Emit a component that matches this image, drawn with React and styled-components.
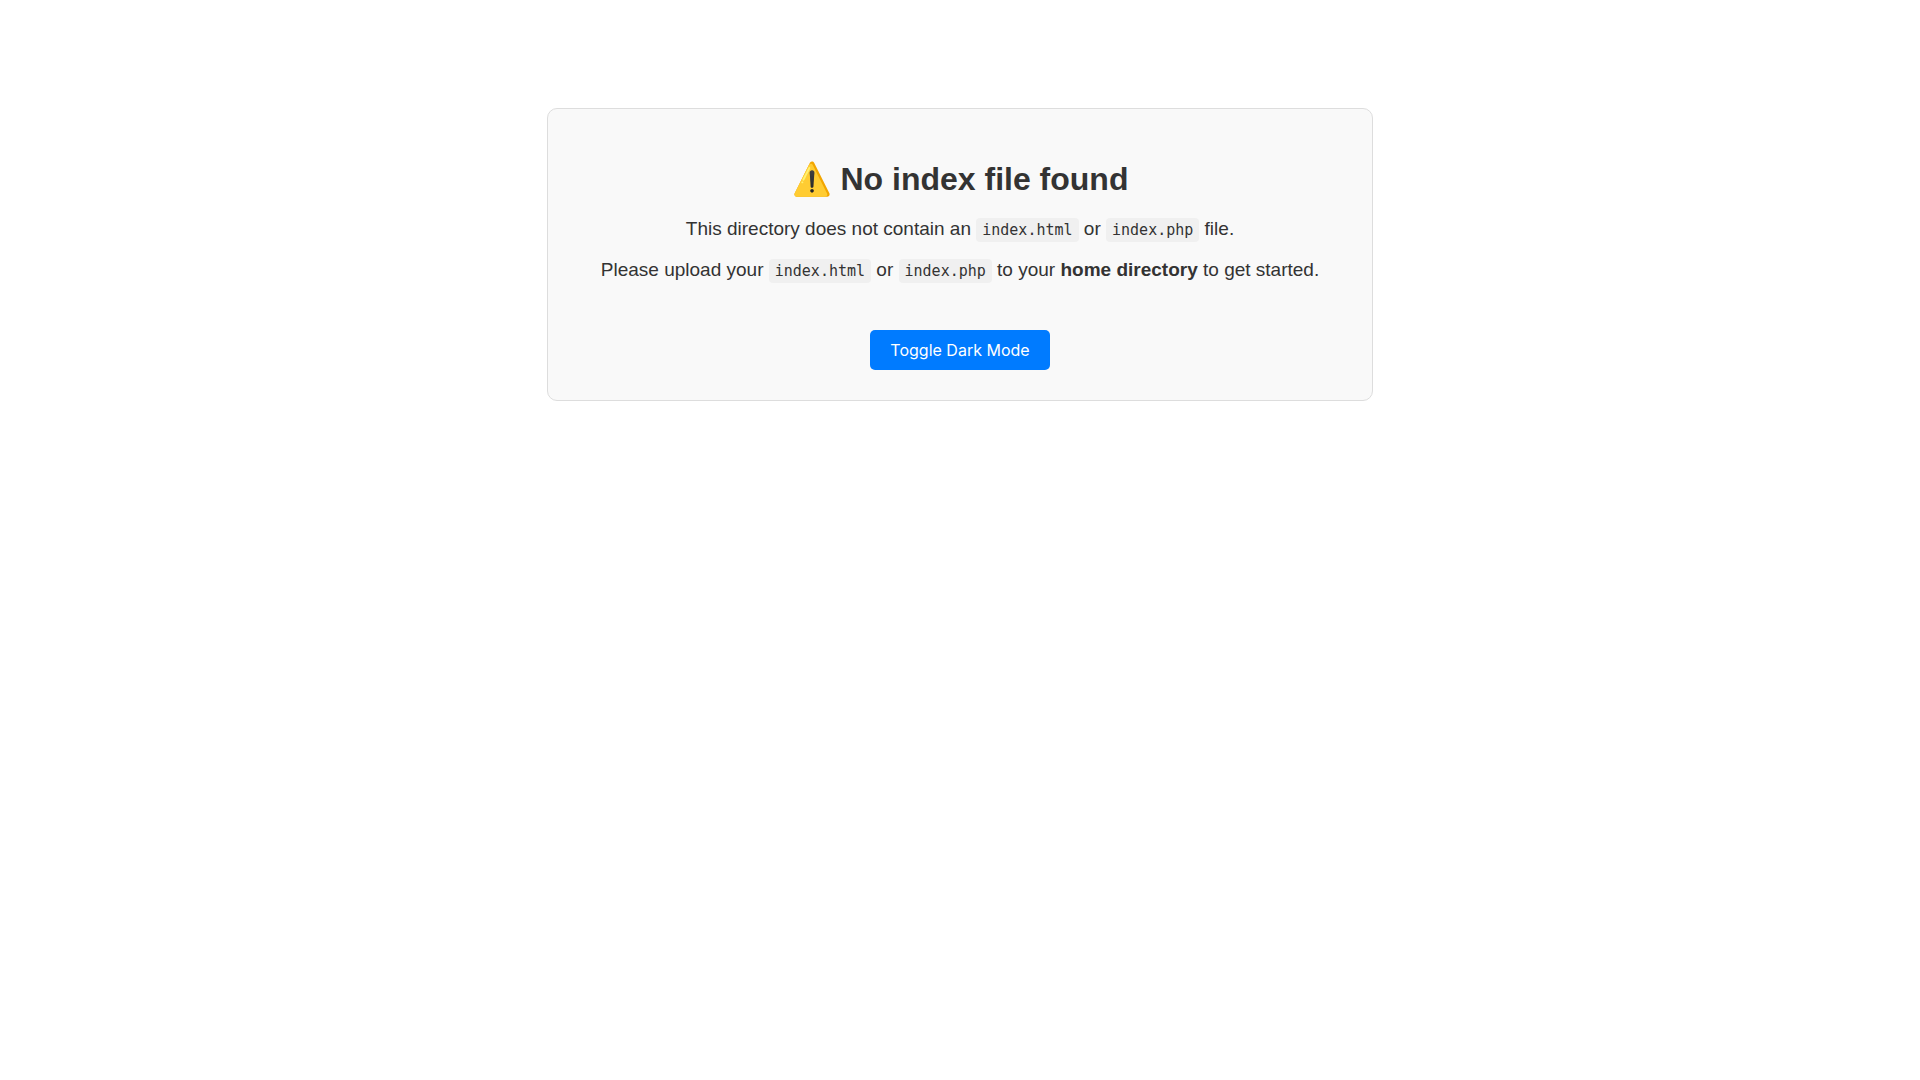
import React, { useState } from "react";
import styled, { createGlobalStyle } from "styled-components";

function App() {
  const [dark, setDark] = useState(false);

  return (
    <Wrapper>
      <GlobalStyle $dark={dark} />
      <Card $dark={dark}>
        <Title>⚠️ No index file found</Title>
        <Text>
          This directory does not contain an <Code $dark={dark}>index.html</Code>{" "}
          or <Code $dark={dark}>index.php</Code> file.
        </Text>
        <Text>
          Please upload your <Code $dark={dark}>index.html</Code> or{" "}
          <Code $dark={dark}>index.php</Code> to your{" "}
          <strong>home directory</strong> to get started.
        </Text>
        <ToggleButton type="button" onClick={() => setDark(!dark)}>
          Toggle Dark Mode
        </ToggleButton>
      </Card>
    </Wrapper>
  );
}

const GlobalStyle = createGlobalStyle`
  body {
    margin: 0;
    font-family: "Liberation Sans", Arial, sans-serif;
    background-color: ${(props) => (props.$dark ? "#121212" : "#fff")};
    color: ${(props) => (props.$dark ? "#eee" : "#333")};
  }
`;

const Wrapper = styled.main`
  display: flex;
  justify-content: center;
  padding: 108px 8px 8px;
  text-align: center;
`;

const Card = styled.div`
  padding: 30px 53px;
  border: 1px solid ${(props) => (props.$dark ? "#444" : "#ddd")};
  border-radius: 10px;
  background-color: ${(props) => (props.$dark ? "#1e1e1e" : "#f9f9f9")};
`;

const Title = styled.h1`
  margin: 21px 0 20px;
  font-size: 32px;
`;

const Text = styled.p`
  margin: 19px 0;
  font-size: 19px;

  ${Title} + & {
    margin-top: 20px;
  }
`;

const Code = styled.code`
  padding: 3px 6px;
  border-radius: 4px;
  font-family: "DejaVu Sans Mono", monospace;
  font-size: 15px;
  background-color: ${(props) => (props.$dark ? "#333" : "#f0f0f0")};
`;

const ToggleButton = styled.button`
  margin-top: 30px;
  padding: 10px 20px;
  border: none;
  border-radius: 5px;
  font-family: Inter, sans-serif;
  font-size: 16px;
  line-height: 20px;
  color: white;
  background-color: #007bff;
  cursor: pointer;
`;

export default App;
